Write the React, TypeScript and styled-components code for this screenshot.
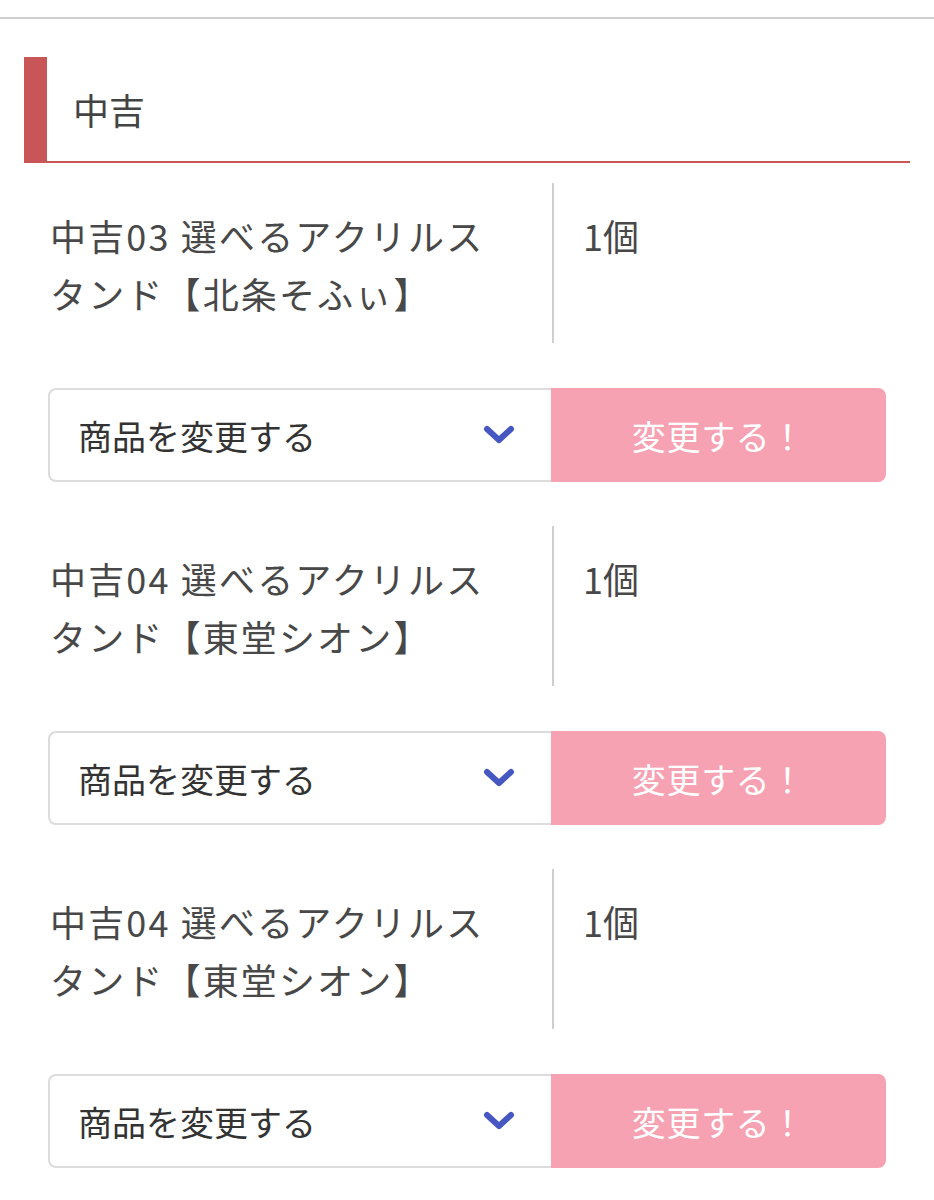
import React from 'react';
import styled, { createGlobalStyle } from 'styled-components';

const GlobalStyle = createGlobalStyle`
  html, body {
    margin: 0;
    padding: 0;
    background: #fff;
  }
  body {
    font-family: "Hiragino Sans", "Noto Sans CJK JP", "Noto Sans", sans-serif;
    color: #444;
  }
`;

// --- Layout ---

const Page = styled.div`
  width: 934px;
  padding-bottom: 40px;
`;

const TopRule = styled.div`
  height: 17px;
  border-bottom: 2px solid #cfcfcf;
`;

const Section = styled.section`
  padding: 38px 24px 0;
`;

const Heading = styled.h2`
  margin: 0;
  height: 104px;
  display: flex;
  align-items: center;
  padding-left: 26px;
  border-left: 23px solid #c85656;
  border-bottom: 2px solid #c85656;
  font-size: 36px;
  font-weight: 400;
  color: #444;
`;

const ItemList = styled.div`
  display: flex;
  flex-direction: column;
  padding: 20px 24px 0;
  gap: 44px;
`;

const Item = styled.div`
  display: flex;
  flex-direction: column;
  gap: 45px;
`;

const InfoRow = styled.div`
  display: grid;
  grid-template-columns: 506px 1fr;
  height: 160px;
`;

const Name = styled.div`
  padding: 23px 42px 0 2px;
  font-size: 36px;
  line-height: 58px;
  letter-spacing: 0.06em;
  color: #484848;
  border-right: 2px solid #cfcfcf;
`;

const Qty = styled.div`
  padding: 23px 0 0 29px;
  font-size: 36px;
  line-height: 58px;
  color: #484848;
`;

// --- Select + submit ---

const ChangeRow = styled.div`
  display: flex;
  height: 94px;
`;

const SelectBox = styled.div`
  flex: 0 0 503px;
  box-sizing: border-box;
  display: flex;
  align-items: center;
  justify-content: space-between;
  padding: 0 36px 0 28px;
  border: 2px solid #dcdcdc;
  border-right: none;
  border-radius: 8px 0 0 8px;
  font-size: 34px;
  color: #333;
`;

const SubmitButton = styled.button`
  flex: 1;
  border: none;
  border-radius: 0 8px 8px 0;
  background: #f7a2b2;
  color: #fff;
  font-family: inherit;
  font-size: 34px;
  letter-spacing: 0.02em;
  padding: 0;
`;

const Chevron = () => (
  <svg width="32" height="22" viewBox="0 0 32 22" aria-hidden>
    <path
      d="M4 5 L16 16 L28 5"
      fill="none"
      stroke="#4657c2"
      strokeWidth="6"
      strokeLinecap="round"
      strokeLinejoin="round"
    />
  </svg>
);

type Prize = {
  name: string;
  qty: string;
};

const prizes: Prize[] = [
  { name: '中吉03 選べるアクリルスタンド【北条そふぃ】', qty: '1個' },
  { name: '中吉04 選べるアクリルスタンド【東堂シオン】', qty: '1個' },
  { name: '中吉04 選べるアクリルスタンド【東堂シオン】', qty: '1個' },
];

export default function App() {
  return (
    <Page>
      <GlobalStyle />
      <TopRule />
      <Section>
        <Heading>中吉</Heading>
        <ItemList>
          {prizes.map((p, i) => (
            <Item key={i}>
              <InfoRow>
                <Name>{p.name}</Name>
                <Qty>{p.qty}</Qty>
              </InfoRow>
              <ChangeRow>
                <SelectBox>
                  <span>商品を変更する</span>
                  <Chevron />
                </SelectBox>
                <SubmitButton type="button">変更する！</SubmitButton>
              </ChangeRow>
            </Item>
          ))}
        </ItemList>
      </Section>
    </Page>
  );
}
